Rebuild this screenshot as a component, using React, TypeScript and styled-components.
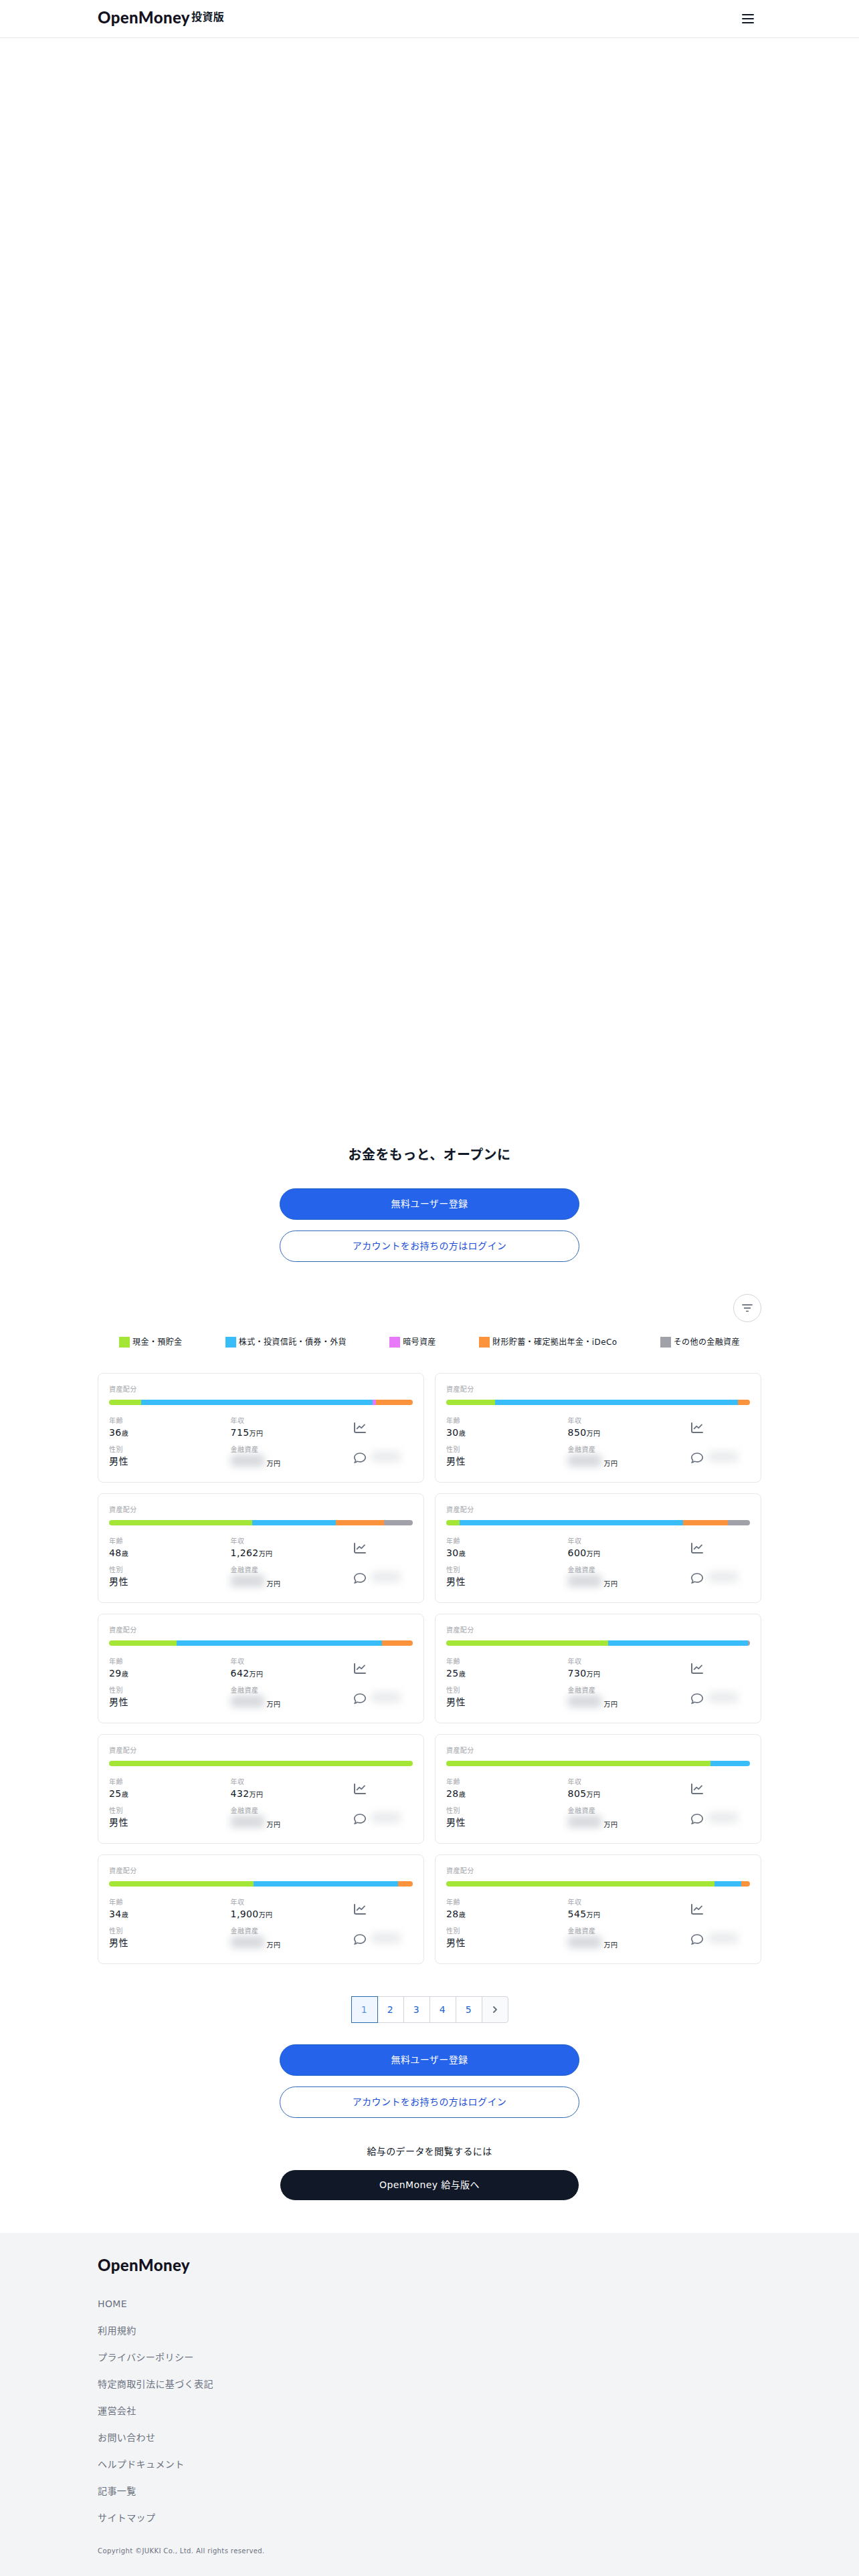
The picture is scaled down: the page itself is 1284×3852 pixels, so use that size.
import React from "react";
import styled, { createGlobalStyle } from "styled-components";
import { FaRegComment } from "react-icons/fa6";

const palette = {
  cash: "#a3e635",
  stock: "#38bdf8",
  crypto: "#e879f9",
  pension: "#fb923c",
  other: "#a1a1aa",
};

type Asset = keyof typeof palette;

const GlobalStyle = createGlobalStyle`
  *, *::before, *::after { box-sizing: border-box; }
  body {
    margin: 0;
    background: #fff;
    color: #111827;
    font-family: "DejaVu Sans", "Noto Sans CJK JP", sans-serif;
    font-size: 16px;
    letter-spacing: 0.025em;
  }
  a { color: inherit; text-decoration: none; }
  button { font: inherit; letter-spacing: inherit; cursor: pointer; }
  h1, h2, p, ul, dl, dd { margin: 0; padding: 0; }
  ul { list-style: none; }
`;

const Container = styled.div`
  max-width: 1024px;
  margin: 0 auto;
  padding: 0 16px;
`;

const Header = styled.header`
  border-bottom: 1px solid #e5e7eb;
`;

const HeaderRow = styled(Container)`
  display: flex;
  align-items: flex-start;
  justify-content: space-between;
  height: 56px;
  padding-top: 8px;
`;

const Brand = styled.a`
  display: flex;
  align-items: center;
  gap: 2px;
`;

const HeaderBrand = styled(Brand)`
  padding-top: 6px;
`;

const Wordmark = styled.span`
  font-family: Lato, sans-serif;
  font-size: 24px;
  font-weight: 900;
  line-height: 24px;
  color: #14131f;
`;

const Edition = styled.span`
  font-size: 16px;
  font-weight: 700;
  line-height: 24px;
`;

const MenuButton = styled.button`
  display: flex;
  padding: 8px;
  border: 0;
  background: none;
  color: #111827;
`;

const Hero = styled.section`
  height: 1640px;
`;

const Title = styled.h1`
  font-size: 20px;
  font-weight: 700;
  line-height: 28px;
  text-align: center;
`;

const Actions = styled.div`
  display: flex;
  flex-direction: column;
  gap: 16px;
  width: 100%;
  max-width: 448px;
  margin: 0 auto;
`;

const tones = {
  primary: { bg: "#2563eb", fg: "#fff", line: "#1d5fc4" },
  outline: { bg: "#fff", fg: "#1d4ed8", line: "#2f66b5" },
  dark: { bg: "#111827", fg: "#fff", line: "#fff" },
};

const ActionLink = styled.a<{ $tone: keyof typeof tones }>`
  display: block;
  padding: 12px 16px;
  border: 1px solid ${(p) => tones[p.$tone].line};
  border-radius: 24px;
  background: ${(p) => tones[p.$tone].bg};
  color: ${(p) => tones[p.$tone].fg};
  font-size: 14px;
  line-height: 21px;
  text-align: center;
`;

const Intro = styled.div`
  display: grid;
  gap: 36px;
  padding: 16px 0 48px;
`;

const FilterRow = styled.div`
  display: flex;
  justify-content: flex-end;
`;

const FilterButton = styled.button`
  display: flex;
  align-items: center;
  justify-content: center;
  width: 42px;
  height: 42px;
  padding: 0;
  border: 1px solid #d1d5db;
  border-radius: 50%;
  background: #fff;
  color: #4b5563;
`;

const Legend = styled.ul`
  display: flex;
  justify-content: space-around;
  padding: 20px 0 36px;
`;

const LegendItem = styled.li`
  display: flex;
  align-items: center;
  gap: 4px;
  font-size: 12px;
  line-height: 20px;
`;

const Swatch = styled.span<{ $asset: Asset }>`
  width: 16px;
  height: 16px;
  background: ${(p) => palette[p.$asset]};
`;

const CardGrid = styled.ul`
  display: grid;
  grid-template-columns: 1fr 1fr;
  gap: 16px;
`;

const Card = styled.li`
  padding: 16px;
  border: 1px solid #e5e7eb;
  border-radius: 8px;
`;

const Label = styled.dt`
  color: #a3a6ab;
  font-size: 10px;
  line-height: 15px;
`;

const BarLabel = styled.p`
  color: #a3a6ab;
  font-size: 10px;
  line-height: 15px;
`;

const Bar = styled.div`
  display: flex;
  height: 8px;
  margin: 8px 0 16px;
  border-radius: 4px;
  overflow: hidden;
`;

const Segment = styled.span<{ $asset: Asset }>`
  background: ${(p) => palette[p.$asset]};
`;

const Facts = styled.dl`
  display: grid;
  grid-template-columns: 2fr 2fr 1fr;
  grid-template-rows: 35px 40px;
  row-gap: 8px;
`;

const Value = styled.dd`
  display: flex;
  align-items: baseline;
  height: 20px;
  font-size: 14px;
  line-height: 20px;
  white-space: nowrap;
`;

const Unit = styled.span`
  font-size: 10px;
`;

const HiddenAmount = styled.dd`
  display: flex;
  align-items: flex-end;
  gap: 4px;
  height: 24px;
  line-height: 20px;
`;

const Blurred = styled.span`
  align-self: flex-start;
  width: 50px;
  height: 18px;
  border-radius: 4px;
  background: rgba(107, 114, 128, 0.28);
  filter: blur(6px);
`;

const BlurredComment = styled.span`
  width: 44px;
  height: 16px;
  margin-bottom: 4px;
  border-radius: 4px;
  background: rgba(107, 114, 128, 0.14);
  filter: blur(6px);
`;

const IconCell = styled.div`
  display: flex;
  align-items: center;
  gap: 8px;
  padding-left: 3px;
  color: #6b7280;

  svg { flex: none; }
`;

const Pager = styled.nav`
  display: flex;
  justify-content: center;
  padding: 48px 0 32px;
`;

const PageLink = styled.a<{ $current?: boolean; $next?: boolean }>`
  display: flex;
  align-items: center;
  justify-content: center;
  width: 40px;
  height: 40px;
  border: 1px solid ${(p) => (p.$current ? "#2b6cb0" : "#d1d5db")};
  border-radius: ${(p) => (p.$next ? "0 4px 4px 0" : "0")};
  background: ${(p) => (p.$current ? "#eff6ff" : p.$next ? "#f9fafb" : "#fff")};
  color: ${(p) => (p.$current ? "#5b93dc" : p.$next ? "#6b7280" : "#2563cf")};
  font-size: 14px;
  line-height: 20px;

  & + & {
    margin-left: -1px;
  }

  &[aria-current] {
    z-index: 1;
  }
`;

const Salary = styled.section`
  display: grid;
  gap: 16px;
  padding: 40px 0 48px;
`;

const SalaryText = styled.p`
  font-size: 14px;
  line-height: 21px;
  text-align: center;
`;

const Footer = styled.footer`
  background: #f3f4f6;
`;

const FooterBody = styled(Container)`
  padding-top: 36px;
  padding-bottom: 30px;
`;

const FooterLinks = styled.ul`
  display: grid;
  gap: 20px;
  padding: 36px 0 32px;
  color: #6b7280;
  font-size: 14px;
  line-height: 20px;
`;

const Copyright = styled.p`
  color: #6b7280;
  font-size: 10px;
  line-height: 15px;
`;

const legend: [Asset, string][] = [
  ["cash", "現金・預貯金"],
  ["stock", "株式・投資信託・債券・外貨"],
  ["crypto", "暗号資産"],
  ["pension", "財形貯蓄・確定拠出年金・iDeCo"],
  ["other", "その他の金融資産"],
];

interface Person {
  age: number;
  income: string;
  assets: [Asset, number][];
}

const people: Person[] = [
  { age: 36, income: "715", assets: [["cash", 48], ["stock", 346], ["crypto", 5], ["pension", 55]] },
  { age: 30, income: "850", assets: [["cash", 73], ["stock", 363], ["pension", 18]] },
  { age: 48, income: "1,262", assets: [["cash", 214], ["stock", 125], ["pension", 72], ["other", 43]] },
  { age: 30, income: "600", assets: [["cash", 20], ["stock", 334], ["pension", 67], ["other", 33]] },
  { age: 29, income: "642", assets: [["cash", 101], ["stock", 307], ["pension", 46]] },
  { age: 25, income: "730", assets: [["cash", 242], ["stock", 209], ["other", 3]] },
  { age: 25, income: "432", assets: [["cash", 454]] },
  { age: 28, income: "805", assets: [["cash", 395], ["stock", 59]] },
  { age: 34, income: "1,900", assets: [["cash", 216], ["stock", 216], ["pension", 22]] },
  { age: 28, income: "545", assets: [["cash", 401], ["stock", 40], ["pension", 13]] },
];

const footerLinks = [
  "HOME",
  "利用規約",
  "プライバシーポリシー",
  "特定商取引法に基づく表記",
  "運営会社",
  "お問い合わせ",
  "ヘルプドキュメント",
  "記事一覧",
  "サイトマップ",
];

function ChartIcon() {
  return (
    <svg width="18" height="16" viewBox="0 0 18 16" fill="none" stroke="currentColor" strokeWidth="2" strokeLinecap="round" strokeLinejoin="round" aria-hidden="true">
      <path d="M1 1v12a2 2 0 0 0 2 2h14" />
      <path strokeWidth="1.8" d="M4.6 9.4l3.6-3.8 3 2.8 4.8-5" />
    </svg>
  );
}

function SignUp() {
  return (
    <Actions>
      <ActionLink href="#signup" $tone="primary">無料ユーザー登録</ActionLink>
      <ActionLink href="#login" $tone="outline">アカウントをお持ちの方はログイン</ActionLink>
    </Actions>
  );
}

function PersonCard({ person }: { person: Person }) {
  return (
    <Card>
      <BarLabel>資産配分</BarLabel>
      <Bar>
        {person.assets.map(([asset, share]) => (
          <Segment key={asset} $asset={asset} style={{ flexGrow: share }} />
        ))}
      </Bar>
      <Facts>
        <div>
          <Label>年齢</Label>
          <Value>{person.age}<Unit>歳</Unit></Value>
        </div>
        <div>
          <Label>年収</Label>
          <Value>{person.income}<Unit>万円</Unit></Value>
        </div>
        <IconCell><ChartIcon /></IconCell>
        <div>
          <Label>性別</Label>
          <Value>男性</Value>
        </div>
        <div>
          <Label>金融資産</Label>
          <HiddenAmount><Blurred /><Unit>万円</Unit></HiddenAmount>
        </div>
        <IconCell><FaRegComment size={18} /><BlurredComment /></IconCell>
      </Facts>
    </Card>
  );
}

export default function App() {
  return (
    <>
      <GlobalStyle />
      <Header>
        <HeaderRow>
          <HeaderBrand href="#top">
            <Wordmark>OpenMoney</Wordmark>
            <Edition>投資版</Edition>
          </HeaderBrand>
          <MenuButton type="button" aria-label="メニュー">
            <svg width="24" height="24" viewBox="0 0 24 24" fill="none" stroke="currentColor" strokeWidth="2" strokeLinecap="round">
              <path d="M4 6h16M4 12h16M4 18h16" />
            </svg>
          </MenuButton>
        </HeaderRow>
      </Header>
      <main>
        <Hero />
        <Container>
          <Intro>
            <Title>お金をもっと、オープンに</Title>
            <SignUp />
          </Intro>
          <FilterRow>
            <FilterButton type="button" aria-label="絞り込み">
              <svg width="20" height="20" viewBox="0 0 20 20" fill="none" stroke="currentColor" strokeWidth="1.4">
                <path d="M2.3 5.3h15.4M5 10h10M8 14.6h4" />
              </svg>
            </FilterButton>
          </FilterRow>
          <Legend>
            {legend.map(([asset, name]) => (
              <LegendItem key={asset}><Swatch $asset={asset} />{name}</LegendItem>
            ))}
          </Legend>
          <CardGrid>
            {people.map((person, i) => <PersonCard key={i} person={person} />)}
          </CardGrid>
          <Pager aria-label="ページ">
            <PageLink href="#1" $current aria-current="page">1</PageLink>
            {[2, 3, 4, 5].map((n) => <PageLink key={n} href={`#${n}`}>{n}</PageLink>)}
            <PageLink href="#2" $next aria-label="次へ">
              <svg width="20" height="20" viewBox="0 0 20 20" fill="currentColor">
                <path fillRule="evenodd" clipRule="evenodd" d="M7.293 14.707a1 1 0 010-1.414L10.586 10 7.293 6.707a1 1 0 011.414-1.414l4 4a1 1 0 010 1.414l-4 4a1 1 0 01-1.414 0z" />
              </svg>
            </PageLink>
          </Pager>
          <SignUp />
          <Salary>
            <SalaryText>給与のデータを閲覧するには</SalaryText>
            <Actions>
              <ActionLink href="#salary" $tone="dark">OpenMoney 給与版へ</ActionLink>
            </Actions>
          </Salary>
        </Container>
      </main>
      <Footer>
        <FooterBody>
          <Brand href="#top"><Wordmark>OpenMoney</Wordmark></Brand>
          <FooterLinks>
            {footerLinks.map((name) => <li key={name}><a href="#page">{name}</a></li>)}
          </FooterLinks>
          <Copyright>Copyright ©JUKKI Co., Ltd. All rights reserved.</Copyright>
        </FooterBody>
      </Footer>
    </>
  );
}
